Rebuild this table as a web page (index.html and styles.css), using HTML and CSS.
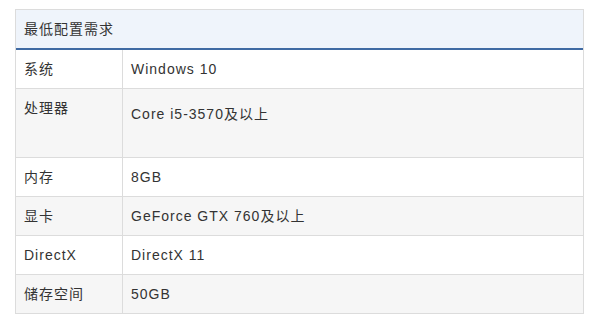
FILE: index.html
```html
<!DOCTYPE html>
<html lang="zh">
<head>
<meta charset="utf-8">
<link rel="stylesheet" href="styles.css">
</head>
<body>
<table class="spec">
  <thead>
    <tr><th colspan="2" class="head">最低配置需求</th></tr>
  </thead>
  <tbody>
    <tr><td class="key">系统</td><td class="val">Windows 10</td></tr>
    <tr class="alt tall"><td class="key">处理器</td><td class="val">Core i5-3570及以上</td></tr>
    <tr><td class="key">内存</td><td class="val">8GB</td></tr>
    <tr class="alt"><td class="key">显卡</td><td class="val">GeForce GTX 760及以上</td></tr>
    <tr><td class="key">DirectX</td><td class="val">DirectX 11</td></tr>
    <tr class="alt"><td class="key">储存空间</td><td class="val">50GB</td></tr>
  </tbody>
</table>
</body>
</html>
```

FILE: styles.css
```css
html, body {
  margin: 0;
  padding: 0;
  background: #fff;
}
body {
  padding: 9px 0 0 15px;
  font-family: "Liberation Sans", "Noto Sans CJK SC", sans-serif;
  font-size: 14px;
  letter-spacing: 1px;
  color: #333;
}
.spec {
  width: 569px;
  border-collapse: separate;
  border-spacing: 0;
  border: 1px solid #dcdcdc;
  border-bottom: none;
}
.spec th, .spec td {
  padding: 9px 8px;
  line-height: 20px;
  text-align: left;
  font-weight: normal;
  vertical-align: top;
  border-bottom: 1px solid #dcdcdc;
}
.head {
  background: #eff4fb;
  border-bottom: 2px solid #3f6aa3 !important;
}
.key {
  width: 107px;
  box-sizing: border-box;
  border-right: 1px solid #dcdcdc;
}
.alt td {
  background: #f6f6f6;
}
.tall .key {
  padding-bottom: 39px;
}
.tall .val {
  padding-top: 15px;
}
```
